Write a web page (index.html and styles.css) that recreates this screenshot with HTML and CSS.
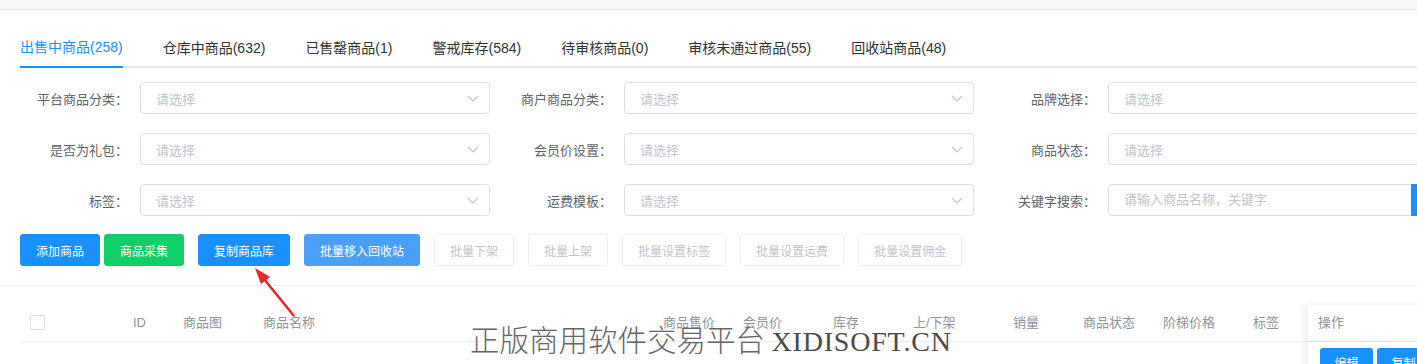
FILE: index.html
```html
<!DOCTYPE html>
<html lang="zh-CN">

<head>
    <meta charset="UTF-8">
    <meta name="viewport" content="width=device-width, initial-scale=1.0">
    <title>商品管理</title>
    <link rel="stylesheet" href="styles.css">
</head>

<body>
<div class="page">
    <div class="card">
        <div class="tabs">
            <div class="tab active">出售中商品(258)</div>
            <div class="tab">仓库中商品(632)</div>
            <div class="tab">已售罄商品(1)</div>
            <div class="tab">警戒库存(584)</div>
            <div class="tab">待审核商品(0)</div>
            <div class="tab">审核未通过商品(55)</div>
            <div class="tab">回收站商品(48)</div>
        </div>

        <form class="filter">
            <div class="filter-row">
                <div class="field">
                    <label>平台商品分类：</label>
                    <div class="select"><span>请选择</span><svg class="arrow" viewBox="0 0 12 7"><path d="M1 1l5 5 5-5"/></svg></div>
                </div>
                <div class="field">
                    <label>商户商品分类：</label>
                    <div class="select"><span>请选择</span><svg class="arrow" viewBox="0 0 12 7"><path d="M1 1l5 5 5-5"/></svg></div>
                </div>
                <div class="field">
                    <label>品牌选择：</label>
                    <div class="select"><span>请选择</span><svg class="arrow" viewBox="0 0 12 7"><path d="M1 1l5 5 5-5"/></svg></div>
                </div>
            </div>
            <div class="filter-row">
                <div class="field">
                    <label>是否为礼包：</label>
                    <div class="select"><span>请选择</span><svg class="arrow" viewBox="0 0 12 7"><path d="M1 1l5 5 5-5"/></svg></div>
                </div>
                <div class="field">
                    <label>会员价设置：</label>
                    <div class="select"><span>请选择</span><svg class="arrow" viewBox="0 0 12 7"><path d="M1 1l5 5 5-5"/></svg></div>
                </div>
                <div class="field">
                    <label>商品状态：</label>
                    <div class="select"><span>请选择</span><svg class="arrow" viewBox="0 0 12 7"><path d="M1 1l5 5 5-5"/></svg></div>
                </div>
            </div>
            <div class="filter-row">
                <div class="field">
                    <label>标签：</label>
                    <div class="select"><span>请选择</span><svg class="arrow" viewBox="0 0 12 7"><path d="M1 1l5 5 5-5"/></svg></div>
                </div>
                <div class="field">
                    <label>运费模板：</label>
                    <div class="select"><span>请选择</span><svg class="arrow" viewBox="0 0 12 7"><path d="M1 1l5 5 5-5"/></svg></div>
                </div>
                <div class="field">
                    <label>关键字搜索：</label>
                    <div class="search">
                        <div class="search-input">请输入商品名称，关键字</div>
                        <div class="search-btn"></div>
                    </div>
                </div>
            </div>
        </form>

        <div class="actions">
            <div class="btn-pair">
                <button type="button" class="btn primary">添加商品</button>
                <button type="button" class="btn success">商品采集</button>
            </div>
            <button type="button" class="btn primary">复制商品库</button>
            <button type="button" class="btn light">批量移入回收站</button>
            <button type="button" class="btn disabled">批量下架</button>
            <button type="button" class="btn disabled">批量上架</button>
            <button type="button" class="btn disabled">批量设置标签</button>
            <button type="button" class="btn disabled">批量设置运费</button>
            <button type="button" class="btn disabled">批量设置佣金</button>
        </div>

        <div class="divider"></div>

        <div class="table">
            <div class="thead">
                <div class="th"><span class="checkbox"></span></div>
                <div class="th">ID</div>
                <div class="th">商品图</div>
                <div class="th">商品名称</div>
                <div class="th">商品售价</div>
                <div class="th">会员价</div>
                <div class="th">库存</div>
                <div class="th">上/下架</div>
                <div class="th">销量</div>
                <div class="th">商品状态</div>
                <div class="th">阶梯价格</div>
                <div class="th">标签</div>
                <div class="th fixed">操作</div>
            </div>
            <div class="tbody">
                <div class="td-fill"></div>
                <div class="td fixed">
                    <button type="button" class="mini">编辑</button>
                    <button type="button" class="mini">复制</button>
                </div>
            </div>
        </div>
    </div>

    <!-- 标注箭头 -->
    <svg class="pointer" width="50" height="60" viewBox="0 0 50 60">
        <line x1="14" y1="17" x2="44" y2="54" stroke="#e5262a" stroke-width="2.5"/>
        <polygon points="5,6 11,22 20,15" fill="#e5262a"/>
    </svg>

    <div class="watermark">正版商用软件交易平台 <span class="latin">XIDISOFT.CN</span></div>
</div>
</body>

</html>
```

FILE: styles.css
```css
/* 页面整体 */
body {
    margin: 0;
    padding: 0;
    background-color: #f6f6f7;
    font-family: "Liberation Sans", "Noto Sans CJK SC", sans-serif;
    color: #606266;
    overflow: hidden;
}

.page {
    position: relative;
    width: 1417px;
    height: 364px;
    overflow: hidden;
}

.card {
    margin-top: 10px;
    background-color: #fff;
    box-shadow: 0 -1px 2px rgba(0, 0, 0, 0.06);
    height: 354px;
    padding-top: 18px;
    box-sizing: border-box;
}

/* 标签页 */
.tabs {
    display: flex;
    align-items: flex-start;
    margin-left: 20px;
    height: 40px;
    box-sizing: border-box;
    border-bottom: 2px solid #e4e7ed;
}

.tab {
    font-size: 14px;
    line-height: 40px;
    height: 40px;
    box-sizing: border-box;
    margin: 0 20px;
    color: #303133;
    white-space: nowrap;
}

.tab:first-child {
    margin-left: 0;
}

.tab.active {
    color: #1890ff;
    line-height: 38px;
    border-bottom: 2px solid #1890ff;
}

/* 筛选表单 */
.filter {
    margin-top: 14px;
    padding-left: 20px;
}

.filter-row {
    display: flex;
    gap: 14px;
    margin-bottom: 19px;
    height: 32px;
}

.field {
    display: flex;
    align-items: center;
    flex: none;
}

.field label {
    width: 120px;
    padding-right: 12px;
    box-sizing: border-box;
    text-align: right;
    font-size: 13px;
    color: #606266;
    white-space: nowrap;
}

.select {
    width: 350px;
    height: 32px;
    box-sizing: border-box;
    border: 1px solid #dcdfe6;
    border-radius: 4px;
    display: flex;
    align-items: center;
    justify-content: space-between;
    padding: 0 10px 0 15px;
    font-size: 13px;
    color: #c0c4cc;
}

.arrow {
    width: 12px;
    height: 7px;
    fill: none;
    stroke: #c0c4cc;
    stroke-width: 1.2;
}

.search {
    display: flex;
    height: 32px;
}

.search-input {
    width: 303px;
    height: 32px;
    box-sizing: border-box;
    border: 1px solid #dcdfe6;
    border-right: none;
    border-radius: 4px 0 0 4px;
    padding-left: 15px;
    font-size: 13px;
    line-height: 30px;
    color: #c0c4cc;
}

.search-btn {
    width: 60px;
    height: 32px;
    background-color: #1890ff;
}

/* 操作按钮 */
.actions {
    display: flex;
    gap: 14px;
    padding-left: 20px;
    margin-top: -1px;
}

.btn-pair {
    display: flex;
    gap: 4px;
}

.btn {
    height: 32px;
    padding: 0 15px;
    font-size: 12px;
    font-family: inherit;
    border-radius: 3px;
    border: 1px solid transparent;
    color: #fff;
    cursor: pointer;
}

.btn.primary {
    background-color: #1890ff;
    border-color: #1890ff;
}

.btn.success {
    background-color: #13ce66;
    border-color: #13ce66;
}

.btn.light {
    background-color: #4aa0f6;
    border-color: #4aa0f6;
}

.btn.disabled {
    background-color: #fff;
    border-color: #ebeef5;
    color: #c0c4cc;
    cursor: not-allowed;
}

.divider {
    margin-top: 19px;
    border-top: 1px solid #ebeef5;
}

/* 表格 */
.table {
    margin-top: 19px;
    margin-left: 20px;
}

.thead {
    display: grid;
    grid-template-columns: 103px 50px 80px 400px 80px 90px 80px 100px 70px 80px 90px 65px 150px;
    height: 36px;
    border-bottom: 1px solid #ebeef5;
}

.th {
    padding-left: 10px;
    font-size: 13px;
    line-height: 36px;
    color: #909399;
    white-space: nowrap;
}

.th .checkbox {
    display: inline-block;
    width: 13px;
    height: 13px;
    border: 1px solid #dcdfe6;
    border-radius: 2px;
    vertical-align: middle;
    margin-top: -2px;
}

.fixed {
    background-color: #fff;
    box-shadow: -4px 0 8px rgba(0, 0, 0, 0.07);
}

.tbody {
    display: grid;
    grid-template-columns: 1288px 150px;
    height: 40px;
}

.td {
    padding: 6px 0 0 12px;
    display: flex;
    gap: 4px;
    align-items: flex-start;
}

.mini {
    width: 53px;
    height: 28px;
    border: none;
    border-radius: 3px;
    background-color: #1890ff;
    color: #fff;
    font-size: 12px;
    font-family: inherit;
}

/* 覆盖层 */
.pointer {
    position: absolute;
    left: 250px;
    top: 262px;
}

.watermark {
    position: absolute;
    left: 470px;
    top: 322px;
    font-family: "Noto Sans CJK SC", sans-serif;
    font-weight: 300;
    font-size: 29.5px;
    line-height: 32px;
    color: #666;
    white-space: nowrap;
}

.watermark .latin {
    font-family: "Liberation Serif", serif;
    font-size: 28px;
    letter-spacing: 0.8px;
    font-weight: 400;
    color: #4a4a4a;
}
```
